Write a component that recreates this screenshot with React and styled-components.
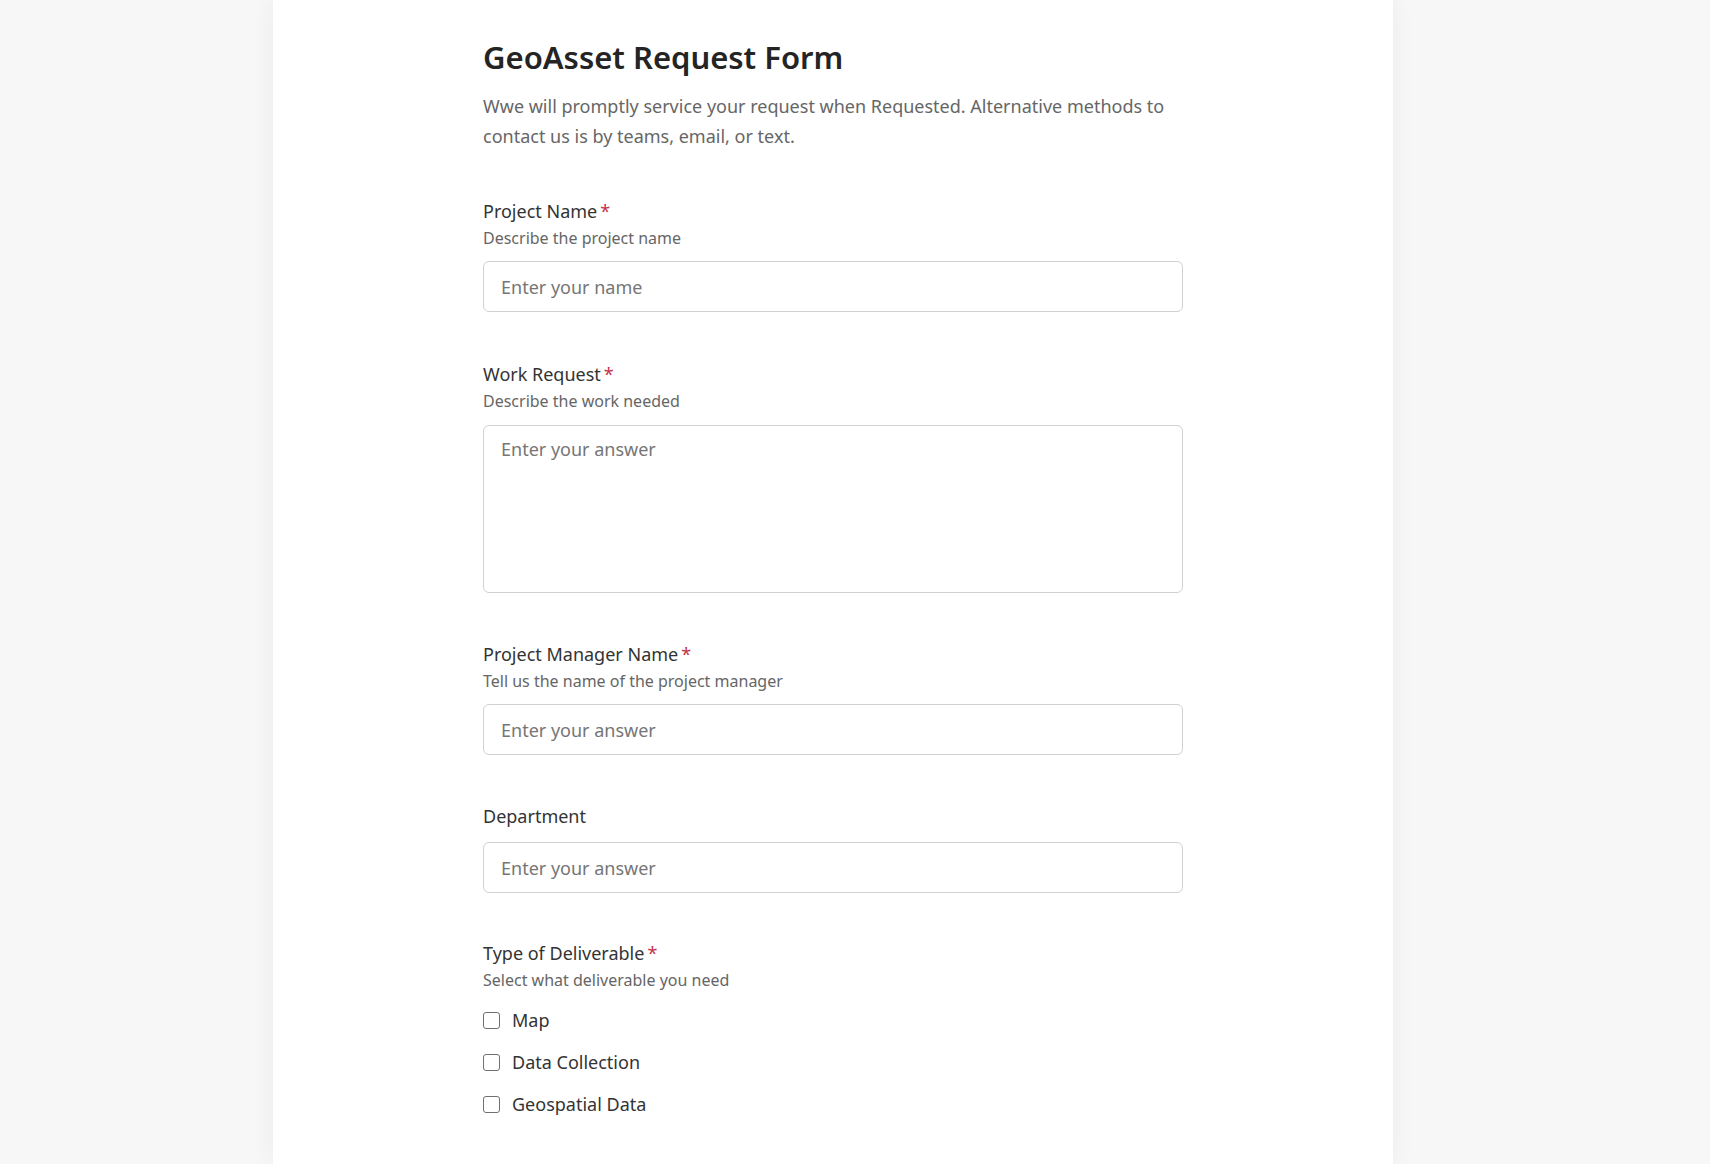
import React from "react";
import styled, { createGlobalStyle } from "styled-components";

const GlobalStyle = createGlobalStyle`
  body {
    margin: 0;
    background-color: #f7f7f7;
    font-family: "Segoe UI", "Noto Sans", "Open Sans", sans-serif;
  }
`;

const Page = styled.div`
  min-height: 100vh;
  display: flex;
`;

const Panel = styled.div`
  width: 1120px;
  margin-left: 273px;
  min-height: 100vh;
  background-color: #fff;
  box-shadow: 0 0 24px rgba(0, 0, 0, 0.05);
  display: flex;
  justify-content: center;
`;

const Content = styled.form`
  width: 700px;
  padding-top: 37px;
  display: flex;
  flex-direction: column;
`;

const Title = styled.h1`
  margin: 0;
  font-size: 31px;
  font-weight: 600;
  color: #242424;
  line-height: 40px;
`;

const Description = styled.p`
  margin: 14px 0 0;
  font-size: 18px;
  line-height: 30px;
  color: #666;
`;

const Question = styled.div`
  display: flex;
  flex-direction: column;
  margin-top: ${(p) => p.gap || 49}px;
`;

const Label = styled.label`
  font-size: 18px;
  line-height: 24px;
  color: #333;
`;

const Required = styled.span`
  color: #c4314b;
  margin-left: 3px;
`;

const Hint = styled.div`
  margin-top: 4px;
  font-size: 16px;
  line-height: 22px;
  color: #666;
`;

const Input = styled.input`
  margin-top: ${(p) => (p.$noHint ? 14 : 12)}px;
  height: 51px;
  box-sizing: border-box;
  padding: 0 17px;
  border: 1px solid #d1d1d1;
  border-radius: 6px;
  font-family: inherit;
  font-size: 18px;
  color: #242424;
  outline: none;

  &::placeholder {
    color: #767676;
  }
`;

const TextArea = styled.textarea`
  margin-top: 13px;
  height: 168px;
  box-sizing: border-box;
  padding: 11px 17px;
  border: 1px solid #d1d1d1;
  border-radius: 6px;
  font-family: inherit;
  font-size: 18px;
  line-height: 24px;
  color: #242424;
  resize: none;
  outline: none;

  &::placeholder {
    color: #767676;
  }
`;

const Options = styled.div`
  margin-top: 17px;
  display: flex;
  flex-direction: column;
  gap: 18px;
`;

const Option = styled.label`
  display: flex;
  align-items: center;
  gap: 12px;
  font-size: 18px;
  line-height: 24px;
  color: #333;
`;

const Box = styled.span`
  width: 15px;
  height: 15px;
  border: 1px solid #707070;
  border-radius: 3px;
  flex-shrink: 0;
`;

const deliverables = ["Map", "Data Collection", "Geospatial Data"];

const App = () => {
  return (
    <Page>
      <GlobalStyle />
      <Panel>
        <Content>
          <Title>GeoAsset Request Form</Title>
          <Description>
            Wwe will promptly service your request when Requested. Alternative
            methods to contact us is by teams, email, or text.
          </Description>

          <Question gap={48}>
            <Label>
              Project Name<Required>*</Required>
            </Label>
            <Hint>Describe the project name</Hint>
            <Input placeholder="Enter your name" />
          </Question>

          <Question gap={50}>
            <Label>
              Work Request<Required>*</Required>
            </Label>
            <Hint>Describe the work needed</Hint>
            <TextArea placeholder="Enter your answer" />
          </Question>

          <Question>
            <Label>
              Project Manager Name<Required>*</Required>
            </Label>
            <Hint>Tell us the name of the project manager</Hint>
            <Input placeholder="Enter your answer" />
          </Question>

          <Question>
            <Label>Department</Label>
            <Input $noHint placeholder="Enter your answer" />
          </Question>

          <Question gap={48}>
            <Label>
              Type of Deliverable<Required>*</Required>
            </Label>
            <Hint>Select what deliverable you need</Hint>
            <Options>
              {deliverables.map((d) => (
                <Option key={d}>
                  <Box />
                  {d}
                </Option>
              ))}
            </Options>
          </Question>
        </Content>
      </Panel>
    </Page>
  );
};

export default App;
